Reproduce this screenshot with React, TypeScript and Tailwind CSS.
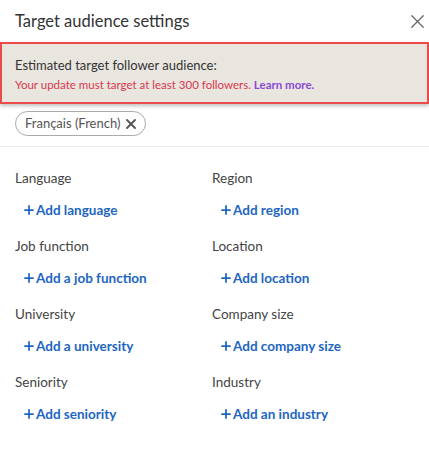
import { X, Plus } from "lucide-react";

const filters = [
  ["Language", "Add language"],
  ["Region", "Add region"],
  ["Job function", "Add a job function"],
  ["Location", "Add location"],
  ["University", "Add a university"],
  ["Company size", "Add company size"],
  ["Seniority", "Add seniority"],
  ["Industry", "Add an industry"],
];

export default function App() {
  return (
    <div className="w-[429px] h-[451px] bg-white [font-family:Lato,sans-serif] text-[#333]">
      <div className="flex items-center justify-between h-[42px] pl-[15px] pr-0 pt-[1px]">
        <h1 className="text-[16.5px] text-[#333]">Target audience settings</h1>
        <X size={23} strokeWidth={1.3} className="text-[#666]" />
      </div>
      <div className="h-[62px] border-2 border-[#ec4b4b] bg-[#e9e6e0] shadow-[0_2px_4px_rgba(0,0,0,0.25)] pl-[13px] pt-[11px]">
        <p className="text-[13px] leading-[20px] text-[#333]">Estimated target follower audience:</p>
        <p className="text-[11.5px] leading-[20px] text-[#d9364f]">
          Your update must target at least 300 followers.{" "}
          <span className="text-[#8a4ad6] font-bold">Learn more.</span>
        </p>
      </div>
      <div className="px-[15px] pt-[6px] pb-[10px] border-b border-[#ececec]">
        <span className="inline-flex items-center gap-[3px] h-[25px] rounded-full border border-[#aaa] pl-[9px] pr-[6px] text-[13px] text-[#555]">
          Français (French)
          <X size={16} strokeWidth={2.8} className="text-[#555]" />
        </span>
      </div>
      <div className="grid grid-cols-[197px_1fr] pl-[15px] pt-[22px]">
        {filters.map(([label, action]) => (
          <div key={label} className="h-[68px]">
            <p className="text-[13.5px] leading-[18px] text-[#444]">{label}</p>
            <p className="flex items-center mt-[13px] ml-[7px] text-[13.5px] font-bold text-[#1d66c2]">
              <Plus size={14} strokeWidth={3} />
              {action}
            </p>
          </div>
        ))}
      </div>
    </div>
  );
}
